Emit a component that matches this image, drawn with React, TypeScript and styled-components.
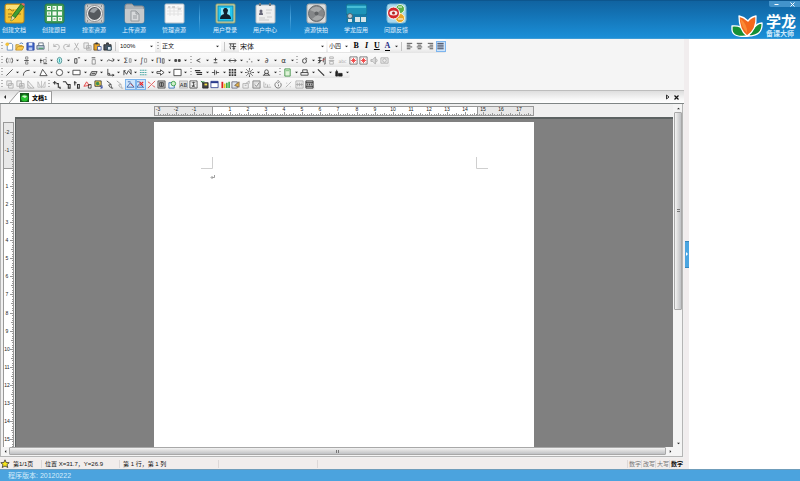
import React, { useLayoutEffect, useRef, useState } from "react";
import styled, { createGlobalStyle, css } from "styled-components";

const GlobalStyle = createGlobalStyle`
  * { box-sizing: border-box; }
  html, body { margin: 0; padding: 0; }
  body {
    background: #fff;
    color: #111;
    font-family: "Liberation Sans", "Noto Sans CJK SC", sans-serif;
    font-size: 6px;
    line-height: 8px;
  }
  button, select {
    appearance: none;
    border: 0;
    margin: 0;
    padding: 0;
    border-radius: 0;
    background: none;
    color: inherit;
    font: inherit;
  }
  svg { display: block; flex: none; }
`;

/* ---------- page frame ---------- */

const Page = styled.div`
  display: flex;
  flex-direction: column;
  min-height: 100vh;
`;

const Header = styled.header`
  display: flex;
  justify-content: space-between;
  height: 39px;
  background: linear-gradient(#1063a0, #1372b4 35%, #1b8fd8);
  border-top: 1px solid #0d568e;
  border-bottom: 1px solid #3d9bd6;
  color: #e2f3ff;
`;

const Launcher = styled.nav`
  display: flex;
  align-items: flex-start;
  padding: 2px 0 0 1px;
`;

const LaunchGroup = styled.div`
  display: flex;
  gap: 14px;
`;

const LaunchButton = styled.button`
  display: flex;
  flex-direction: column;
  align-items: center;
  gap: 2px;
  width: 26px;
  white-space: nowrap;
`;

const LaunchDivider = styled.span`
  width: 1px;
  height: 30px;
  margin: 0 12px;
  background: linear-gradient(transparent, #4aa3dc, transparent);
`;

const Brand = styled.div`
  display: flex;
  flex-direction: column;
  align-items: flex-end;
`;

const WindowControls = styled.div`
  display: flex;
  width: 31px;
  height: 7px;
  border-bottom-left-radius: 2px;
  background: #4393cb;
`;

const WindowButton = styled.button`
  display: flex;
  flex: 1;
  align-items: center;
  justify-content: center;
`;

const LogoRow = styled.div`
  display: flex;
  gap: 3px;
  padding: 7px 4px 0 0;
`;

const LogoText = styled.div`
  display: flex;
  flex-direction: column;
  color: #fff;
`;

const LogoName = styled.strong`
  font-size: 15px;
  line-height: 16px;
`;

const LogoSub = styled.span`
  font-size: 7px;
  font-weight: 700;
  line-height: 8px;
  color: #cfe9fa;
`;

const Main = styled.main`
  display: grid;
  flex: 1;
  grid-template-columns: minmax(0, 1fr) 5px 111px;
`;

const Editor = styled.section`
  display: flex;
  flex-direction: column;
  min-width: 0;
  background: #f0f0f0;
`;

const Splitter = styled.div`
  display: flex;
  align-items: center;
  justify-content: flex-end;
  background: #f1edee;
`;

const SplitterHandle = styled.button`
  display: flex;
  align-items: center;
  justify-content: center;
  width: 4px;
  height: 27px;
  background: #4ba5e0;
  border-top: 1px solid #3588bf;
  border-bottom: 1px solid #3588bf;
`;

const Footer = styled.footer`
  height: 12px;
  padding: 0 8px;
  background: #4ba3de;
  border-top: 1px solid #6f9dbb;
  color: #d5ecfb;
  font-size: 7px;
  line-height: 11px;
`;

/* ---------- toolbars ---------- */

const ToolbarArea = styled.div`
  display: flex;
  flex-direction: column;
  align-items: flex-start;
  background: #f5f5f5;
`;

const Toolbar = styled.div<{ $height: number }>`
  display: flex;
  align-items: center;
  height: ${(p) => p.$height}px;
  background: linear-gradient(#fbfbfb, #f3f3f3 70%, #e4e4e4);
  border-radius: 0 2px 2px 0;
`;

const ToolGroup = styled.div<{ $width: number }>`
  display: flex;
  width: ${(p) => p.$width}px;
`;

const Tool = styled.button<{ $active?: boolean; $muted?: boolean }>`
  display: flex;
  flex: 1;
  align-items: center;
  justify-content: center;
  min-width: 0;
  height: 11px;
  color: ${(p) => (p.$muted ? "#aaa" : "#333")};
  ${(p) =>
    p.$active &&
    css`
      background: #cfe5fb;
      outline: 1px solid #7db5ee;
      outline-offset: -1px;
    `}
`;

const Letter = styled.span<{ $italic?: boolean; $underline?: boolean }>`
  color: #000;
  font-family: "Liberation Serif", serif;
  font-size: 8px;
  font-weight: 700;
  font-style: ${(p) => (p.$italic ? "italic" : "normal")};
  text-decoration: ${(p) => (p.$underline ? "underline" : "none")};
  line-height: 10px;
`;

const ColorLetter = styled(Letter)`
  border-bottom: 1px solid #000;
  color: #1f2f86;
  line-height: 8px;
`;

const SplitTool = styled.span`
  display: flex;
  flex: 1;
  align-items: center;
`;

const SplitArrow = styled.button`
  display: flex;
  align-items: center;
  justify-content: center;
  width: 6px;
  height: 11px;
`;

const Grip = styled.span`
  width: 2px;
  height: 9px;
  margin: 0 1px;
  background: repeating-linear-gradient(#b4b4b4 0 1px, transparent 1px 3px);
`;

const Divider = styled.span`
  width: 1px;
  height: 9px;
  margin: 0 2px;
  background: #c4c4c4;
`;

const Combo = styled.span<{ $width: number }>`
  display: flex;
  align-items: center;
  width: ${(p) => p.$width}px;
  height: 11px;
  margin: 0 1px;
  padding-right: 2px;
  background: #fff;
`;

const ComboSelect = styled.select<{ $large?: boolean }>`
  flex: 1;
  min-width: 0;
  height: 11px;
  padding-left: 1px;
  font-size: ${(p) => (p.$large ? 7 : 6)}px;
  line-height: 11px;
`;

/* ---------- tabs, rulers, canvas ---------- */

const TabBar = styled.div`
  display: flex;
  align-items: flex-end;
  justify-content: space-between;
  height: 14px;
  padding: 0 4px 0 1px;
  background: linear-gradient(#dedede, #f8f8f8 70%, #fff);
  border-top: 1px solid #bdbdbd;
  border-bottom: 1px solid #7f8585;
`;

const TabSide = styled.div`
  display: flex;
  align-items: flex-end;
`;

const TabButton = styled.button`
  display: flex;
  align-items: center;
  gap: 3px;
  height: 12px;
  padding-right: 4px;
  background: #fff;
  border-top: 1px solid #aaa;
  border-right: 1px solid #999;
  font-weight: 900;
  color: #000;
`;

const IconButton = styled.button`
  display: flex;
  align-items: center;
  justify-content: center;
  width: 8px;
  height: 12px;
`;

const Frame = styled.div`
  display: flex;
  flex: 1;
  flex-direction: column;
  margin: 0 1px 1px 0;
  border: solid #b5b5b5;
  border-width: 0 1px 1px 1px;
  background: #f0f0f0;
`;

const Workspace = styled.div`
  display: grid;
  flex: 1;
  grid-template-columns: 14px minmax(0, 1fr) 9px;
`;

const SideRuler = styled.div`
  display: flex;
  padding: 18px 0 0 2px;
`;

const RulerTrack = styled.div`
  flex: 1;
  overflow: hidden;
  contain: size;
`;

const CanvasColumn = styled.div`
  display: flex;
  flex-direction: column;
`;

const TopRuler = styled.div`
  display: flex;
  justify-content: center;
  height: 13px;
  padding-top: 2px;
`;

const Canvas = styled.div`
  display: flex;
  flex: 1;
  justify-content: center;
  padding-top: 3px;
  background: #808080;
  border-top: 2px solid #5c6262;
  box-shadow: inset 1px 0 #5c6262;
`;

const Paper = styled.article`
  width: 380px;
  min-height: 100%;
  padding-top: 34px;
  background: #fff;
`;

const ScrollColumn = styled.div`
  display: flex;
  flex-direction: column;
  align-items: stretch;
  padding-left: 1px;
  background: #f4f4f4;
`;

const ScrollRow = styled.div`
  display: flex;
  height: 9px;
  background: #f4f4f4;
`;

const ScrollButton = styled.button`
  display: flex;
  flex: none;
  align-items: center;
  justify-content: center;
  width: 8px;
  height: 8px;
`;

const ScrollCorner = styled.span`
  width: 8px;
`;

const ThumbVertical = styled.div`
  display: flex;
  flex: 198;
  align-items: center;
  justify-content: center;
  background: linear-gradient(90deg, #f3f3f3, #dcdcdc 45%, #bfc1c4);
  border: 1px solid #a8a8a8;
  border-radius: 1px;
`;

const ScrollSpace = styled.div`
  flex: 130;
`;

const ThumbHorizontal = styled.div`
  display: flex;
  flex: 1;
  align-items: center;
  justify-content: center;
  height: 8px;
  background: linear-gradient(#f3f3f3, #dcdcdc 45%, #bfc1c4);
  border: 1px solid #a8a8a8;
  border-radius: 1px;
`;

const StatusBar = styled.div`
  display: flex;
  align-items: center;
  justify-content: space-between;
  height: 11px;
  padding-right: 1px;
  background: #f1edec;
`;

const StatusSide = styled.div`
  display: flex;
  align-items: center;
  white-space: nowrap;
`;

const StatusCell = styled.span<{ $width: number }>`
  width: ${(p) => p.$width}px;
  min-height: 8px;
  padding-left: 3px;
  border-right: 1px solid #dcd8d8;
`;

const Mode = styled.span<{ $on?: boolean }>`
  padding-left: 1px;
  border-left: 1px solid #ddd8d8;
  color: ${(p) => (p.$on ? "#111" : "#777")};
  font-weight: ${(p) => (p.$on ? 700 : 400)};
`;

/* ---------- drawings ---------- */

const Arrow = ({ dir = "down", size = 3, fill = "#222" }: { dir?: string; size?: number; fill?: string }) => {
  const shape: Record<string, string> = {
    down: "M0 1h4L2 3z",
    up: "M0 3h4L2 1z",
    left: "M3 0v4L1 2z",
    right: "M1 0v4l2-2z",
  };
  return (
    <svg width={size} height={size} viewBox="0 0 4 4" fill={fill} aria-hidden="true">
      <path d={shape[dir]} />
    </svg>
  );
};

const Sign = ({ x = 5, size = 8, children }: { x?: number; size?: number; children: string }) => (
  <text x={x} y="8" textAnchor="middle" fontSize={size} fill="currentColor" stroke="none" fontFamily="DejaVu Sans, sans-serif">
    {children}
  </text>
);

const glyphs: Record<string, React.ReactNode> = {
  new: (<><path d="M2.500 1.500H7L8.500 3v6h-6z" fill="#fff" stroke="#5d83b5" /><circle cx="2.500" cy="2.500" r="2" fill="#f3c23c" stroke="none" /></>),
  open: (<><path d="M1 9V3h3l1 1h3v2" fill="#f7d36b" stroke="#b98b1f" /><path d="M1 9l2-4h7L8 9z" fill="#fbc94a" stroke="#c6922a" /><path d="M5 2q2-2 4 0" stroke="#3a6fb5" /></>),
  save: (<><path d="M1 1h8v8H1z" fill="#4166c9" stroke="#28439a" /><path d="M3 1h4v3H3z" fill="#e8eefc" stroke="none" /><path d="M3 6h4v3H3z" fill="#b9caf2" stroke="none" /></>),
  print: (<><path d="M3 4V1h5v3" fill="#fff" stroke="#567" /><path d="M1 4h8v4H1z" fill="#b9c9d8" stroke="#4b6178" /><path d="M3 7h5" stroke="#2e9a45" /></>),
  undo: <path d="M2 2v3h3M2 5q3-4 6-1 1 3-2 5" />,
  redo: <path d="M8 2v3H5M8 5Q5 1 2 4q-1 3 2 5" />,
  cut: <path d="M3 1l3 6M7 1L4 7M3.500 7a1 1 0 1 0 .1 2M6.500 7a1 1 0 1 1-.1 2" />,
  copy: <path d="M1 1h5v6H1zM4 4h5v5H4zM5 6h3M5 7.500h3" fill="#eee" />,
  paste: (<><path d="M1 2h6v7H1z" fill="#e7a52c" stroke="#66491a" /><path d="M3 1h2v1H3z" fill="#333" /><path d="M5 5h4v4H5z" fill="#fff" stroke="#3a56a0" /></>),
  find: (<><path d="M1 3h3V1h2v2h3v6H1z" fill="#4a5563" stroke="#222" /><path d="M5 5h4v4H5z" fill="#dfe8f4" stroke="#245" /></>),
  style: <path d="M1 2h8M3 2v3M6 2v3M4 5h5M6.500 5v4M5 7h3M2 5l1 3" />,
  align: <path d="M2 1.500h6M2 3.500h4M2 5.500h6M2 7.500h4" />,
  alignC: <path d="M2 1.500h6M3 3.500h4M2 5.500h6M3 7.500h4" />,
  alignR: <path d="M2 1.500h6M4 3.500h4M2 5.500h6M4 7.500h4" />,
  alignJ: <path d="M1.500 1.500h7M1.500 3.500h7M1.500 5.500h7M1.500 7.500h7" stroke="#223" />,
  paren: (<><path d="M2.500 2q-2 3 0 6M7.500 2q2 3 0 6" /><path d="M4 3h2v4H4z" stroke="#888" strokeDasharray="1 1" /></>),
  frac: (<><path d="M4 1h2.500v2.500H4zM4 6.500h2.500V9H4z" stroke="#777" /><path d="M2.500 5h5" /></>),
  sup: (<><path d="M5 4h3v3H5zM7 2h2" stroke="#888" /><path d="M1 5h3M2 3v5M5 8.500h4" /></>),
  zero: (<><ellipse cx="5" cy="5" rx="2.500" ry="3.500" fill="#c8f2f2" stroke="#488" /><path d="M5 3v4" stroke="#1aa" /></>),
  power: <path d="M3 3h2.500v5H3zM6.500 2H9" />,
  over: (<><path d="M3.500 4h3.500v5H3.500z" stroke="#888" /><path d="M3 2h4" /></>),
  wave: <path d="M1 6q2-3 4-1t4-1M7 3l2 1-1 2" />,
  sum: (<><Sign x={3}>Σ</Sign><path d="M7 3h2v4H7z" stroke="#888" /></>),
  integral: (<><Sign x={3}>∫</Sign><path d="M6 3h2.500v4H6z" stroke="#888" /></>),
  prod: (<><Sign x={3}>Π</Sign><path d="M7 3h2v5H7z" stroke="#555" /></>),
  dots: <path d="M2 4h2v2H2zM6 4h2v2H6z" fill="#555" />,
  less: <path d="M7 3L3 5l4 2" />,
  plusminus: <path d="M3 4h4M5 2v4M3 7.500h4" />,
  both: <path d="M1 5h8M3 3L1 5l2 2M7 3l2 2-2 2" />,
  therefore: <path d="M5 3v1M2.500 6v1M7.500 6v1" strokeWidth="1.400" />,
  partial: <Sign>∂</Sign>,
  alpha: <Sign>α</Sign>,
  loop: <path d="M3 4q2-2 4 0v3q-2 2-4 0zM6 2l2 1" />,
  han: (<><path d="M1 2h4M3 1v7M1 5h4M1 8l4-3M7 2v5M9 1v8H8" /><path d="M6 5l3-2" stroke="#c44" /></>),
  stack: <path d="M3 1h4v2H3zM2 5h6M3 6h4v3H3z" />,
  abc: <Sign size={5}>abc</Sign>,
  redBox: (<><path d="M1 1h8v8H1z" fill="#fff" stroke="#666" /><path d="M3 3l4 4M7 3L3 7M5 2v6M2 5h6" stroke="#e33" /></>),
  sound: <path d="M1 4h2l3-3v8L3 6H1zM7 3q2 2 0 4" fill="#ddd" />,
  clock: (<><path d="M1 2h8v6H1z" fill="#eee" /><circle cx="5" cy="5" r="2" /></>),
  line: <path d="M1.500 8.500l7-7" />,
  arc: <path d="M1.500 8.500q0-6 7-6" />,
  tri: <path d="M4 1.500L1 8.500h8z" fill="#fff" />,
  circle: <circle cx="5" cy="5" r="3.500" fill="#fff" />,
  rect: <path d="M1 2.500h8v5H1z" fill="#fff" />,
  cube: <path d="M1 8l2-4h6L7 8zM3 6h4" fill="#ddd" />,
  axis: <path d="M2 1v7h7M2 6h2M7 7l2 1-2 1M4 8V6" />,
  wavePoly: <path d="M1 8V3l3 4 2-4 3 4V2M1 3h2M7 2h2" />,
  lines: <path d="M1 2.500h8M1 5h8M1 7.500h8" stroke="#2a9a94" strokeDasharray="2 .6" />,
  blockArrow: <path d="M1 4h4V2l4 3-4 3V6H1z" fill="#fff" />,
  square: <path d="M1 1.500h8v7H1z" fill="#fff" />,
  coil: <path d="M1 3h6M2 5h7M3 7h6" strokeWidth="1.300" />,
  cap: <path d="M1 5h3M6 5h3M4 2v6M6 3v4" />,
  grid: <path d="M1 2h8M1 5h8M1 8h8" strokeWidth="2" strokeDasharray="2 1" />,
  sun: (<><circle cx="5" cy="5" r="1.700" /><path d="M5 0v2M5 8v2M0 5h2M8 5h2M1.500 1.500L3 3M7 7l1.500 1.500M8.500 1.500L7 3M3 7L1.500 8.500" /></>),
  dome: <path d="M1 8h8M2 8l2-2M8 8L6 6M3 4a2 2 0 1 1 4 0v2H3z" />,
  jar: (<><path d="M2 1h6v8H2z" fill="#dff3d8" stroke="#348a3b" /><path d="M3 3h4" stroke="#69b76d" /></>),
  stamp: <path d="M1 5h8v3H1zM3 5V2h5v3" fill="#eee" />,
  diag: <path d="M1 1.500l7 7" strokeWidth="1.300" />,
  people: <path d="M2 4h2v5H2zM5 6h4v3H5zM3 2v2" fill="#222" stroke="#222" />,
  layers: <path d="M2 1h5v5H2zM4 4h5v5H4z" fill="#eee" />,
  slope: <path d="M2 1v8h7zM2 5l4 4" />,
  mirror: <path d="M5 1v8M1 8V2l3 6zM9 8V2L6 8z" strokeWidth=".7" />,
  move: <path d="M1 3h4M3 1v4M5 4h2v4h2v2" strokeWidth="1.200" />,
  bend: <path d="M1 2h3l2 3h2M7 5h2v4H7z" strokeWidth="1.200" />,
  drop: <path d="M2 1v5M1 3h3M5 5h2v4H5z" strokeWidth="1.200" />,
  redTri: (<><path d="M1 7l3-5 3 4z" stroke="#d33" fill="#fdd" /><path d="M6 5h3v4H6z" /></>),
  picture: (<><path d="M1 1h7v6H1z" fill="#f8d34d" stroke="#333" /><circle cx="4" cy="4" r="2" fill="#3d8f4f" stroke="none" /><path d="M6 5l3 4M9 6v3H7" stroke="#2742a5" /></>),
  pointer: <path d="M2 1l5 4-3 .5 2 3M7 6v3h2" />,
  blueTri: (<><path d="M2 2h3M1 8h8M1 8l4-5 4 5" stroke="#315ca5" /><path d="M5 4l3 3" stroke="#c33" /></>),
  blueTriX: (<><path d="M1 2h3M1 8h8M1 8l3-4 4 4" stroke="#315ca5" /><path d="M4 2l4 4M8 2L4 6" stroke="#e22" strokeWidth="1.300" /></>),
  scatter: <path d="M1 9l8-8M1 2l3 2M6 6l3 2" stroke="#d44" />,
  panel: (<><path d="M1 1h8v8H1z" fill="#b8b8b8" stroke="#555" /><path d="M3 3h4v4H3zM5 3v4" stroke="#333" /></>),
  globe: (<><path d="M1 3h6v6H1z" stroke="#2c65ac" fill="#e9f3ff" /><circle cx="6" cy="4" r="2.500" stroke="#2a9b3c" fill="#cfeecb" /></>),
  ab: (<><path d="M.5 1h9v8h-9z" fill="#ddd" stroke="#999" strokeWidth=".6" /><Sign size={6}>AB</Sign></>),
  seal: <path d="M1 1h8v8H1zM3 3h4M5 2v5M3 6l4 2M7 5L3 8" strokeWidth=".8" />,
  film: (<><path d="M1 1l3 3M3 3h6v6H3z" fill="#444" stroke="#222" /><path d="M5 4h3v2H5z" fill="#f4df43" stroke="none" /><path d="M1 2h4" stroke="#2a9c3c" /></>),
  windowIcon: (<><path d="M1 1.500h8v7H1z" fill="#fff" stroke="#2a3a8c" /><path d="M1 2.500h8" stroke="#2a3a8c" strokeWidth="2" /></>),
  bars: (<><path d="M1.500 2v7" stroke="#d22" strokeWidth="2" /><path d="M4 4v5" stroke="#e6c51f" strokeWidth="2" /><path d="M6.500 3v6M9 2v7" stroke="#23a12f" strokeWidth="1.600" /></>),
  book: (<><path d="M1 2h6v7H1z" fill="#dfe4ec" stroke="#667" /><path d="M4 6l5-4v6z" fill="#e3b144" stroke="#765" /></>),
  share: <path d="M1 4h6v5H1zM4 4l4-3v3M3 6h2" fill="#eee" />,
  check: <path d="M1 1h8v8H1zM3 5l2 2 3-4" fill="#ddd" stroke="#777" />,
  chart: <path d="M1 2v6h8M3 4v2M5 5v3M7 5v1" />,
  turn: <path d="M4 2a3.500 3.500 0 1 0 3 1M4 0l2 2-2 2M5 5v2" stroke="#666" />,
  nodes: <path d="M2 8l3-3M5 5l3-3M7 7v1M3 3v1" />,
  code: <path d="M1 1h8v8H1zM3 3v4M5 3v4M7 3v4M1 5h8" fill="#eee" />,
  codeDark: <path d="M1 1h8v8H1zM1 3h8M1 7h8M3 4v2M5 4v2M7 4v2" fill="#ccc" stroke="#222" />,
};

const Glyph = ({ name }: { name: string }) => (
  <svg width="9" height="9" viewBox="0 0 10 10" fill="none" stroke="currentColor" strokeWidth=".9" aria-hidden="true">
    {glyphs[name]}
  </svg>
);

const Icons = ({ names, width, muted = [], active = [] }: { names: string[]; width: number; muted?: number[]; active?: number[] }) => (
  <ToolGroup $width={width}>
    {names.map((name, i) => (
      <Tool key={i} aria-label={name} $muted={muted.includes(i)} $active={active.includes(i)}>
        <Glyph name={name} />
      </Tool>
    ))}
  </ToolGroup>
);

const Pairs = ({ names, width }: { names: string[]; width: number }) => (
  <ToolGroup $width={width}>
    {names.map((name, i) => (
      <SplitTool key={i}>
        <Tool aria-label={name}><Glyph name={name} /></Tool>
        <SplitArrow aria-label={`${name} menu`}><Arrow /></SplitArrow>
      </SplitTool>
    ))}
  </ToolGroup>
);

const Dropdown = ({ label, value, width, large }: { label: string; value: string; width: number; large?: boolean }) => (
  <Combo $width={width}>
    <ComboSelect aria-label={label} defaultValue={value} $large={large}>
      <option>{value}</option>
    </ComboSelect>
    <Arrow />
  </Combo>
);

const launchArt: Record<string, React.ReactNode> = {
  note: (
    <>
      <rect x="1" y="1" width="19" height="19" rx="2" fill="#f5c431" stroke="#b98116" />
      <path d="M2 2h17v4H2z" fill="#fbe07a" />
      <path d="M4 7q2-2 3 0t3 0M4 11h4M12 11h5M4 14h4" stroke="#7d6424" strokeWidth=".8" fill="none" />
      <path d="M7 18l1-5 9-12 3 2-9 12z" fill="#3e9f35" stroke="#235c1e" strokeWidth=".8" />
      <path d="M7 18l1-5 3 2z" fill="#f3d9a2" />
      <path d="M17 1l3 2 1-2-2-1z" fill="#e46a5e" />
    </>
  ),
  sheet: (
    <>
      <rect x="1" y="1" width="19" height="19" rx="2" fill="#46a05a" stroke="#2f7b43" />
      <path d="M3 3h4v4H3zM8.500 3h4v4h-4zM14 3h4v4h-4zM3 8.500h4v4H3zM8.500 8.500h4v4h-4zM14 8.500h4v4h-4zM3 14h4v4H3zM8.500 14h4v4h-4zM14 14h4v4h-4z" fill="#f4fbf2" />
      <path d="M4 4.500h2M10 4v2M5 9.500v2M9.500 16h2M15 16h2" stroke="#568c61" />
    </>
  ),
  lens: (
    <>
      <rect x="1" y="1" width="19" height="19" rx="2" fill="#c9cbcc" stroke="#929698" />
      <circle cx="10.500" cy="10.500" r="8" fill="#f1f1f1" stroke="#8b8d90" />
      <circle cx="10.500" cy="10.500" r="6.500" fill="#55595e" />
      <path d="M6 9a5 5 0 0 1 8-3l-4 4z" fill="#9ca1a6" />
      <path d="M3 3h1M17 3h1M3 18h1M17 18h1" stroke="#555" />
    </>
  ),
  folder: (
    <>
      <path d="M1 3q0-2 2-2h5l2 2h8q2 0 2 2v13q0 2-2 2H3q-2 0-2-2z" fill="#aeb2b6" stroke="#85898d" />
      <path d="M1 6h19v12q0 2-2 2H3q-2 0-2-2z" fill="#c6c9cb" />
      <path d="M7 8h5l3 3v7H7zM12 8v3h3M9 13h4M9 15h4" fill="#d8dadc" stroke="#979b9f" />
    </>
  ),
  table: (
    <>
      <rect x="1" y="1" width="19" height="19" rx="1" fill="#f8f8f8" stroke="#b9c2c9" />
      <path d="M3 5h15M3 8h15M3 11h15M6 3v10M10 3v10M14 3v10" stroke="#e2e2e2" />
      <path d="M4 4h2M8 4h3M14 6h3" stroke="#b7b7b7" />
    </>
  ),
  login: (
    <>
      <rect x="1" y="1" width="19" height="19" rx="1" fill="#d9dcae" stroke="#8f9c69" />
      <rect x="3" y="3" width="15" height="15" fill="#25c6ee" stroke="#1189b4" />
      <path d="M6 5h9v9H6z" fill="#87e6fa" />
      <path d="M10.500 5a2.500 2.500 0 0 1 2 4l-.5 2q4 1 4 5H5q0-4 4-5l-.5-2a2.500 2.500 0 0 1 2-4z" fill="#12212c" />
    </>
  ),
  card: (
    <>
      <rect x="1" y="2" width="19" height="18" rx="1" fill="#efefef" stroke="#b7bdc2" />
      <path d="M5 0v3M15 0v3" stroke="#6c7880" strokeWidth="2" />
      <circle cx="6" cy="8" r="1.500" fill="#667" />
      <path d="M4 12q0-3 2-3t2 3z" fill="#667" />
      <path d="M11 7h6M11 10h5M4 15h6M12 14h5M4 17h10" stroke="#cbcbcb" />
    </>
  ),
  disc: (
    <>
      <rect x="1" y="1" width="19" height="19" rx="2" fill="#dcdddd" stroke="#a1a5a7" />
      <circle cx="10.500" cy="10.500" r="8" fill="#858789" stroke="#696c6e" />
      <path d="M4 7a8 8 0 0 1 12-1l-5 4zM17 14a8 8 0 0 1-11 2l5-4z" fill="#a6a8a9" />
      <circle cx="10.500" cy="10.500" r="2" fill="#606365" />
    </>
  ),
  app: (
    <>
      <rect x="0" y="1" width="21" height="11" rx="2" fill="#1d94b9" stroke="#116b8d" />
      <path d="M1 3h19v2H1z" fill="#47bdd6" />
      <rect x="0" y="12" width="21" height="8" rx="1" fill="#1679a6" />
      <path d="M2 16h4v3H2zM9 14h5v5H9zM15 14h5v5h-5z" fill="#d6e4e8" />
      <circle cx="4" cy="13" r="2.500" fill="#b9c7cc" stroke="#4a6472" />
    </>
  ),
  feedback: (
    <>
      <rect x="1" y="1" width="19" height="19" rx="3" fill="#a9d8ed" stroke="#7bb9d5" />
      <circle cx="14" cy="6" r="4.500" fill="#58b04b" stroke="#e9f7e0" />
      <circle cx="14" cy="15" r="4.500" fill="#e9a526" stroke="#fff0c2" />
      <circle cx="7.500" cy="10" r="6" fill="#d3272b" stroke="#fff" />
      <ellipse cx="7.500" cy="10" rx="4" ry="2.500" fill="#f5ecec" />
      <circle cx="7.500" cy="10" r="1.500" fill="#b02022" />
      <path d="M12 4h4M12 16h5" stroke="#fff" />
    </>
  ),
};

const Launch = ({ art, label }: { art: string; label: string }) => (
  <LaunchButton>
    <svg width="21" height="21" viewBox="0 0 21 21" fill="none" aria-hidden="true">{launchArt[art]}</svg>
    {label}
  </LaunchButton>
);

const Logo = () => (
  <svg width="32" height="23" viewBox="0 0 32 23" aria-hidden="true">
    <g stroke="#fff" strokeWidth="1.300" strokeLinejoin="round">
      <path d="M17 22Q2 24 1 16v-4q9-1 13 5z" fill="#159036" />
      <path d="M17 22Q32 22 31 9q-5 0-9 6z" fill="#159036" />
      <path d="M16 22Q8 16 8 2q5 1 9 5 3-4 8-5 1 14-9 20z" fill="#f2681c" />
    </g>
    <path d="M9 4q2 10 7 15 1-8-7-15z" fill="#fa8a35" />
  </svg>
);

/* ---------- rulers ---------- */

const STEP = 18;
const offsetOf = (n: number) => Math.round(n * 18.07);
const eighths = [0, 1, 2, 3, 4, 5, 6, 7];
const tickLength = (k: number) => (k === 0 ? 3 : k === 4 ? 2 : 1);

const HorizontalRuler = () => {
  const origin = 58;
  const marks = Array.from({ length: 21 }, (_, i) => i - 3);
  return (
    <svg width="380" height="10" viewBox="0 0 380 10" aria-hidden="true">
      <rect x=".5" y=".5" width="379" height="9" fill="#e8e8e8" stroke="#999" />
      <rect x={origin} y="1" width="265" height="8" fill="#fff" />
      <path d={`M${origin}.5 0v10M323.500 0v10`} stroke="#999" />
      {marks.map((n) => {
        const x = origin + offsetOf(n);
        return (
          <g key={n}>
            {n !== 0 && n < 18 && (
              <text x={x} y="5" textAnchor="middle" fontSize="5" fill="#222">{n}</text>
            )}
            {eighths
              .filter((k) => x + k * 2 < 376)
              .map((k) => (
                <path key={k} d={`M${x + Math.round((k * STEP) / 8)}.5 ${9 - tickLength(k)}v${tickLength(k)}`} stroke="#999" />
              ))}
          </g>
        );
      })}
    </svg>
  );
};

const VerticalRuler = () => {
  const track = useRef<HTMLDivElement>(null);
  const [height, setHeight] = useState(0);

  useLayoutEffect(() => {
    const el = track.current;
    if (!el) return;
    const measure = () => setHeight(el.clientHeight);
    measure();
    const observer = new ResizeObserver(measure);
    observer.observe(el);
    return () => observer.disconnect();
  }, []);

  const origin = 46;
  const count = Math.max(0, Math.floor((height - 6 - origin) / 18.07) + 3);
  const marks = Array.from({ length: count }, (_, i) => i - 2);
  return (
    <RulerTrack ref={track}>
      <svg width="11" height={height} aria-hidden="true">
        <rect x=".5" y=".5" width="10" height={height} fill="#fff" stroke="#999" />
        <rect x="1" y="1" width="9" height={origin} fill="#e8e8e8" />
        <path d={`M0 ${origin}.5h11`} stroke="#999" />
        {marks.map((n) => {
          const y = origin + offsetOf(n);
          return (
            <g key={n}>
              {n !== 0 && <text x="4" y={y + 2} textAnchor="middle" fontSize="5" fill="#222">{n}</text>}
              {eighths.map((k) => (
                <path key={k} d={`M${10 - tickLength(k)} ${y + Math.round((k * STEP) / 8)}.5h${tickLength(k)}`} stroke="#999" />
              ))}
            </g>
          );
        })}
      </svg>
    </RulerTrack>
  );
};

const MarginMarks = () => (
  <svg width="380" height="26" viewBox="0 0 380 26" fill="none" aria-hidden="true">
    <path d="M47 12.500h11.500V1M334 12.500h-11.500V1" stroke="#cfcfcf" />
    <path d="M60.500 19v2.500h-3M58.500 20l-1.500 1.500 1.500 1.500" stroke="#888" strokeWidth=".8" />
  </svg>
);

/* ---------- application ---------- */

export default function App() {
  return (
    <Page>
      <GlobalStyle />
      <Header>
        <Launcher>
          <LaunchGroup>
            <Launch art="note" label="创建文档" />
            <Launch art="sheet" label="创建题目" />
            <Launch art="lens" label="搜索资源" />
            <Launch art="folder" label="上传资源" />
            <Launch art="table" label="管理资源" />
          </LaunchGroup>
          <LaunchDivider />
          <LaunchGroup>
            <Launch art="login" label="用户登录" />
            <Launch art="card" label="用户中心" />
          </LaunchGroup>
          <LaunchDivider />
          <LaunchGroup>
            <Launch art="disc" label="资源快拍" />
            <Launch art="app" label="学龙应用" />
            <Launch art="feedback" label="问题反馈" />
          </LaunchGroup>
        </Launcher>
        <Brand>
          <WindowControls>
            <WindowButton aria-label="最小化">
              <svg width="5" height="5" viewBox="0 0 5 5" stroke="#fff"><path d="M.5 2.500h4" /></svg>
            </WindowButton>
            <WindowButton aria-label="关闭">
              <svg width="5" height="5" viewBox="0 0 5 5" stroke="#fff"><path d="M.5.5l4 4M4.500.5l-4 4" /></svg>
            </WindowButton>
          </WindowControls>
          <LogoRow>
            <Logo />
            <LogoText>
              <LogoName>学龙</LogoName>
              <LogoSub>备课大师</LogoSub>
            </LogoText>
          </LogoRow>
        </Brand>
      </Header>

      <Main>
        <Editor>
          <ToolbarArea>
            <Toolbar $height={14}>
              <Grip />
              <Icons width={42} names={["new", "open", "save", "print"]} />
              <Divider />
              <Icons width={62} names={["undo", "redo", "cut", "copy", "paste", "find"]} muted={[0, 1, 2, 3]} />
              <Divider />
              <Dropdown label="缩放" value="100%" width={36} />
              <Grip />
              <Dropdown label="样式" value="正文" width={60} />
              <Divider />
              <Icons width={11} names={["style"]} />
              <Dropdown label="字体" value="宋体" width={87} large />
              <Dropdown label="字号" value="小四" width={22} />
              <ToolGroup $width={31}>
                <Tool aria-label="加粗"><Letter>B</Letter></Tool>
                <Tool aria-label="倾斜"><Letter $italic>I</Letter></Tool>
                <Tool aria-label="下划线"><Letter $underline>U</Letter></Tool>
              </ToolGroup>
              <ToolGroup $width={17}>
                <SplitTool>
                  <Tool aria-label="文字颜色"><ColorLetter>A</ColorLetter></Tool>
                  <SplitArrow aria-label="选择颜色"><Arrow /></SplitArrow>
                </SplitTool>
              </ToolGroup>
              <Divider />
              <Icons width={42} names={["align", "alignC", "alignR", "alignJ"]} active={[3]} />
            </Toolbar>
            <Toolbar $height={14}>
              <Grip />
              <Pairs width={185} names={["paren", "frac", "sup", "zero", "power", "over", "wave", "sum", "integral", "prod", "dots"]} />
              <Grip />
              <Pairs width={102} names={["less", "plusminus", "both", "therefore", "partial", "alpha"]} />
              <Grip />
              <Pairs width={17} names={["loop"]} />
              <Icons width={74} names={["han", "stack", "abc", "redBox", "redBox", "sound", "clock"]} muted={[1, 2, 5, 6]} />
            </Toolbar>
            <Toolbar $height={11}>
              <Grip />
              <Pairs width={185} names={["line", "arc", "tri", "circle", "rect", "cube", "axis", "wavePoly", "lines", "blockArrow", "square"]} />
              <Grip />
              <Pairs width={85} names={["coil", "cap", "grid", "sun", "dome"]} />
              <Grip />
              <Pairs width={68} names={["jar", "stamp", "diag", "people"]} />
            </Toolbar>
            <Toolbar $height={12}>
              <Grip />
              <Icons width={43} names={["layers", "copy", "slope", "mirror"]} muted={[0, 1, 2, 3]} />
              <Grip />
              <Icons
                width={264}
                names={["move", "bend", "drop", "redTri", "picture", "pointer", "pointer", "blueTri", "blueTriX", "scatter", "panel", "globe", "ab", "seal", "film", "windowIcon", "bars", "book", "share", "check", "chart", "turn", "nodes", "code", "codeDark"]}
                active={[7, 8]}
                muted={[6, 18, 20, 22, 23]}
              />
            </Toolbar>
          </ToolbarArea>

          <TabBar>
            <TabSide>
              <IconButton aria-label="上一个"><Arrow dir="left" size={4} /></IconButton>
              <svg width="11" height="12" viewBox="0 0 11 12" aria-hidden="true">
                <path d="M0 12L9 1.500Q9.500.5 11 .5V12z" fill="#fff" />
                <path d="M0 12L9 1.500Q9.500.5 11 .5" fill="none" stroke="#999" />
              </svg>
              <TabButton>
                <svg width="9" height="9" viewBox="0 0 9 9" aria-hidden="true">
                  <path d="M0 0h9v9H0z" fill="#15581c" />
                  <circle cx="4.500" cy="5" r="3.500" fill="#27c32f" />
                  <path d="M2 3.500q2-2 5 0L5 5z" fill="#d4f3cf" />
                </svg>
                文档1
              </TabButton>
            </TabSide>
            <TabSide>
              <IconButton aria-label="下一个">
                <svg width="4" height="6" viewBox="0 0 4 6" fill="none" stroke="#333"><path d="M.5 1v4l2.500-2z" /></svg>
              </IconButton>
              <IconButton aria-label="关闭文档">
                <svg width="5" height="5" viewBox="0 0 5 5" stroke="#111"><path d="M.5.5l4 4M4.500.5l-4 4" strokeWidth="1.200" /></svg>
              </IconButton>
            </TabSide>
          </TabBar>

          <Frame>
            <Workspace>
              <SideRuler><VerticalRuler /></SideRuler>
              <CanvasColumn>
                <TopRuler><HorizontalRuler /></TopRuler>
                <Canvas>
                  <Paper><MarginMarks /></Paper>
                </Canvas>
              </CanvasColumn>
              <ScrollColumn>
                <ScrollButton aria-label="向上滚动"><Arrow dir="up" /></ScrollButton>
                <ThumbVertical>
                  <svg width="3" height="4" viewBox="0 0 3 4" stroke="#777"><path d="M0 .5h3M0 2.500h3" /></svg>
                </ThumbVertical>
                <ScrollSpace />
                <ScrollButton aria-label="向下滚动"><Arrow /></ScrollButton>
              </ScrollColumn>
            </Workspace>
            <ScrollRow>
              <ScrollButton aria-label="向左滚动"><Arrow dir="left" /></ScrollButton>
              <ThumbHorizontal>
                <svg width="4" height="3" viewBox="0 0 4 3" stroke="#777"><path d="M.5 0v3M2.500 0v3" /></svg>
              </ThumbHorizontal>
              <ScrollButton aria-label="向右滚动"><Arrow dir="right" /></ScrollButton>
              <ScrollCorner />
            </ScrollRow>
          </Frame>

          <StatusBar>
            <StatusSide>
              <svg width="10" height="9" viewBox="0 0 10 9" aria-hidden="true">
                <path d="M5 .8l1.200 2.700 3 .2L7 5.600l.8 2.900L5 7 2.200 8.500 3 5.600.8 3.700l3-.2z" fill="#f6e61c" stroke="#333" strokeWidth=".8" />
              </svg>
              <StatusCell $width={32}>第1/1页</StatusCell>
              <StatusCell $width={78}>位置 X=31.7，Y=26.9</StatusCell>
              <StatusCell $width={99}>第 1 行，第 1 列</StatusCell>
              <StatusCell $width={99} />
            </StatusSide>
            <StatusSide>
              <Mode>数字</Mode>
              <Mode>改写</Mode>
              <Mode>大写</Mode>
              <Mode $on>数字</Mode>
            </StatusSide>
          </StatusBar>
        </Editor>

        <Splitter>
          <SplitterHandle aria-label="展开侧栏"><Arrow dir="right" size={4} fill="#fff" /></SplitterHandle>
        </Splitter>
      </Main>

      <Footer>程序版本: 20120222</Footer>
    </Page>
  );
}
